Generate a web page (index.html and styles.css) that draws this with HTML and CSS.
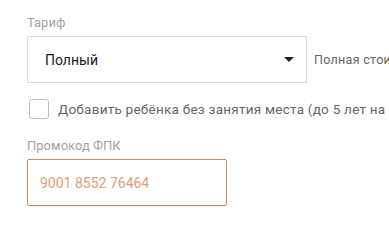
FILE: index.html
```html
<!DOCTYPE html>
<html lang="ru">
<head>
  <meta charset="UTF-8">
  <title>Тариф</title>
  <link rel="stylesheet" href="styles.css">
</head>
<body>
  <div class="form">
    <!-- Tariff select -->
    <div class="field">
      <div class="label">Тариф</div>
      <div class="row">
        <div class="select">
          <span>Полный</span>
          <span class="caret"></span>
        </div>
        <div class="hint">Полная стоимость билета</div>
      </div>
    </div>

    <!-- Child checkbox -->
    <label class="check">
      <span class="box"></span>
      <span class="check-text">Добавить ребёнка без занятия места (до 5 лет на руках)</span>
    </label>

    <!-- Promo code -->
    <div class="field">
      <div class="label">Промокод ФПК</div>
      <div class="promo">9001 8552 76464</div>
    </div>
  </div>
</body>
</html>
```

FILE: styles.css
```css
:root {
  --color-label: #a3a3a3;
  --color-border: #dadada;
  --color-text: #1a1a1a;
  --color-muted: #666;
  --color-promo: #d08658;
  --color-promo-text: #e09c7c;
}
* { box-sizing: border-box; margin: 0; padding: 0; }
body {
  font-family: "Roboto", "Noto Sans", sans-serif;
  background: #fff;
  color: var(--color-text);
  overflow: hidden;
}
.form { padding: 15px 0 0 27px; width: 600px; }

.label { font-size: 13px; color: var(--color-label); line-height: 16px; margin-bottom: 5px; }

.row { display: flex; align-items: center; gap: 7px; }
.select {
  width: 280px; height: 47px;
  border: 1px solid var(--color-border);
  display: flex; align-items: center; justify-content: space-between;
  padding: 0 12px 0 17px;
  font-size: 14px;
}
.caret {
  width: 0; height: 0;
  border-left: 5px solid transparent;
  border-right: 5px solid transparent;
  border-top: 5px solid #222;
}
.hint { font-size: 12.5px; letter-spacing: 0.3px; color: var(--color-muted); white-space: nowrap; }

.check { display: flex; align-items: center; gap: 9px; margin: 16px 0 19px 2px; }
.box {
  width: 20px; height: 20px; flex: none;
  border: 1px solid #bdbdbd; border-radius: 3px;
}
.check-text { font-size: 13.5px; letter-spacing: 0.25px; color: var(--color-muted); white-space: nowrap; }

.promo {
  width: 200px; height: 47px;
  border: 1px solid var(--color-promo); border-radius: 2px;
  display: flex; align-items: center;
  padding-left: 12px;
  font-size: 14px; color: var(--color-promo-text);
}
```
